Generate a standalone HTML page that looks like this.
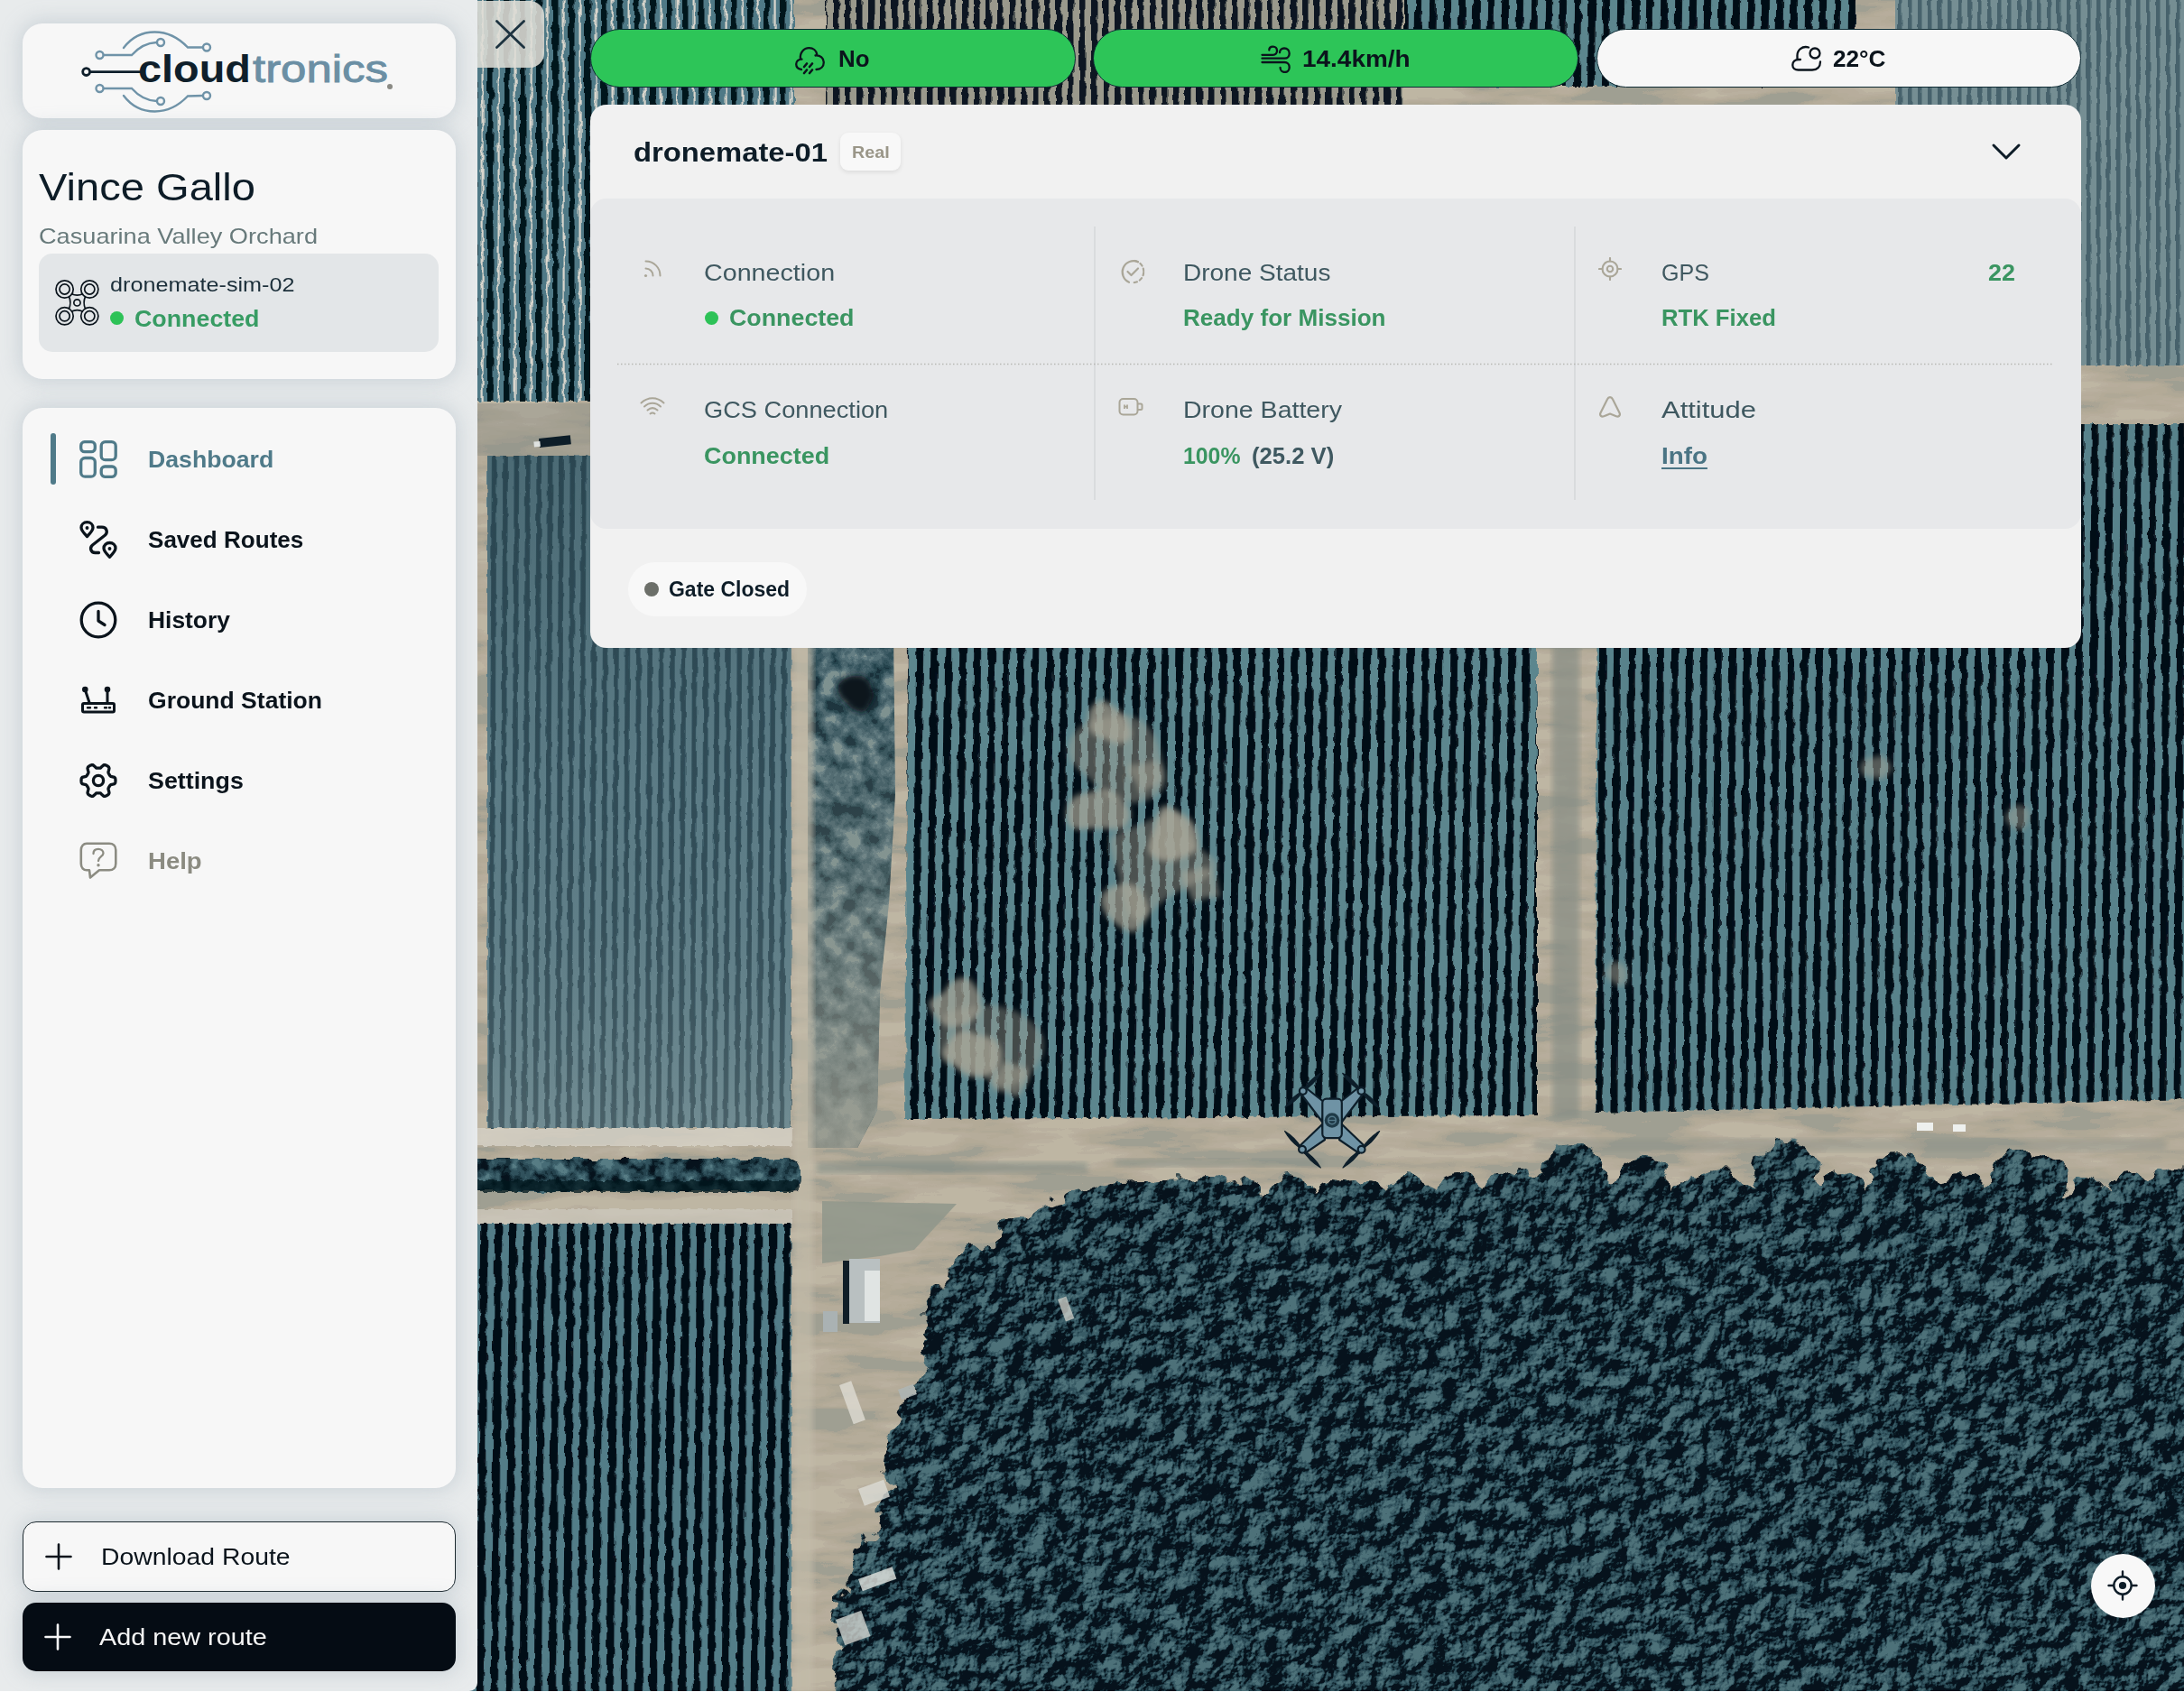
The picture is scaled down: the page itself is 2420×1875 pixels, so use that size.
<!DOCTYPE html>
<html lang="en">
<head>
<meta charset="utf-8">
<title>Cloudtronics Dashboard</title>
<style>
*{box-sizing:border-box;margin:0;padding:0}
html,body{width:2420px;height:1875px;overflow:hidden;background:#fff}
body{position:relative;font-family:"Liberation Sans",sans-serif;color:#0b141c}
.abs{position:absolute}
.t{position:absolute;white-space:nowrap;line-height:1;transform-origin:0 50%}
#map{position:absolute;left:0;top:0;width:2420px;height:1873.5px;overflow:hidden;background:#3d5a64}
#side{position:absolute;left:0;top:0;width:529px;height:1873.500px;background:#e8ebec;border-bottom-right-radius:9px}
.card{position:absolute;left:25px;width:480px;background:#f7f7f7;border-radius:22px;box-shadow:0 0 22px 3px rgba(150,166,180,.36)}
.nav{font-weight:700;font-size:25px;color:#0b141c}
.pill{position:absolute;top:32px;height:64.500px;border-radius:33px;border:1.5px solid #0d2a33}
.lbl{font-size:26px;color:#3f5860}
.val{font-size:26px;font-weight:700;color:#3a9561}
</style>
</head>
<body>
<svg width="2420" height="1875" viewBox="0 0 2420 1875" style="position:absolute;left:0;top:0">
<defs>
<pattern id="pA" width="16" height="64" patternUnits="userSpaceOnUse" patternTransform="rotate(0.7)">
  <rect width="16" height="64" fill="#5c868e"/><rect x="0" width="7.900" height="64" fill="#050f19"/>
</pattern>
<pattern id="pB" width="16" height="64" patternUnits="userSpaceOnUse" patternTransform="rotate(0.4)">
  <rect width="16" height="64" fill="#59828b"/><rect x="1" width="7.900" height="64" fill="#050f19"/>
</pattern>
<pattern id="pG" width="16" height="64" patternUnits="userSpaceOnUse" patternTransform="rotate(0.5)">
  <rect width="16" height="64" fill="#527d88"/><rect x="0" width="8.300" height="64" fill="#050f19"/>
</pattern>
<pattern id="pC" width="12.400" height="64" patternUnits="userSpaceOnUse" patternTransform="rotate(0.3)">
  <rect width="12.400" height="64" fill="#60808a"/><rect x="2" width="5.500" height="64" fill="#304e59"/>
</pattern>
<pattern id="pD" width="11" height="64" patternUnits="userSpaceOnUse">
  <rect width="11" height="64" fill="#748e93"/><rect x="2" width="4.500" height="64" fill="#46626c"/>
</pattern>
<pattern id="pE" width="18" height="64" patternUnits="userSpaceOnUse">
  <rect width="18" height="64" fill="#4f7986"/><rect x="0" width="6.500" height="64" fill="#06121c"/><rect x="11.500" width="2.200" height="64" fill="#d9d6cd"/>
</pattern>
<pattern id="pF" width="13" height="64" patternUnits="userSpaceOnUse">
  <rect width="13" height="64" fill="#9a998c"/><rect x="0" width="6.500" height="64" fill="#0a1822"/>
</pattern>
<filter id="rough" x="-2%" y="-2%" width="104%" height="104%">
  <feTurbulence type="fractalNoise" baseFrequency="0.14 0.07" numOctaves="2" seed="3" result="n"/>
  <feDisplacementMap in="SourceGraphic" in2="n" scale="6" xChannelSelector="R" yChannelSelector="G"/>
</filter>
<filter id="rough2" x="-2%" y="-2%" width="104%" height="104%">
  <feTurbulence type="fractalNoise" baseFrequency="0.12 0.06" numOctaves="2" seed="8" result="n"/>
  <feDisplacementMap in="SourceGraphic" in2="n" scale="4" xChannelSelector="R" yChannelSelector="G"/>
</filter>
<filter id="forest" x="-3%" y="-6%" width="106%" height="112%" color-interpolation-filters="sRGB"><feTurbulence type="fractalNoise" baseFrequency="0.06" numOctaves="2" seed="14" result="d"/><feDisplacementMap in="SourceGraphic" in2="d" scale="22" xChannelSelector="R" yChannelSelector="G" result="shape"/><feTurbulence type="fractalNoise" baseFrequency="0.05" numOctaves="4" seed="11" result="t"/><feDiffuseLighting in="t" surfaceScale="5" diffuseConstant="1" lighting-color="#ffffff" result="L"><feDistantLight azimuth="225" elevation="45"/></feDiffuseLighting><feColorMatrix in="t" type="matrix" values="1 0 0 0 0  1 0 0 0 0  1 0 0 0 0  0 0 0 0 1" result="n"/><feComposite in="L" in2="n" operator="arithmetic" k1="0" k2="1.6" k3="1.4" k4="-1.29" result="g"/><feComponentTransfer in="g" result="q"><feFuncR type="discrete" tableValues="0.024 0.024 0.024 0.039 0.090 0.149 0.192 0.227 0.259 0.302"/><feFuncG type="discrete" tableValues="0.071 0.071 0.071 0.102 0.188 0.263 0.318 0.361 0.396 0.447"/><feFuncB type="discrete" tableValues="0.110 0.110 0.110 0.145 0.224 0.306 0.361 0.400 0.431 0.478"/><feFuncA type="linear" slope="0" intercept="1"/></feComponentTransfer><feComposite in="q" in2="shape" operator="in"/></filter>
<filter id="ground" x="0" y="0" width="100%" height="100%" color-interpolation-filters="sRGB"><feTurbulence type="fractalNoise" baseFrequency="0.008 0.04" numOctaves="4" seed="2" result="t"/><feColorMatrix in="t" type="matrix" values="3.0 0 0 0 -1.0  3.0 0 0 0 -1.0  3.0 0 0 0 -1.0  0 0 0 0 1" result="g"/><feComponentTransfer in="g" result="q"><feFuncR type="discrete" tableValues="0.627 0.667 0.690 0.702 0.710 0.718 0.729 0.749"/><feFuncG type="discrete" tableValues="0.624 0.647 0.659 0.667 0.675 0.682 0.694 0.714"/><feFuncB type="discrete" tableValues="0.576 0.584 0.592 0.596 0.604 0.612 0.624 0.643"/></feComponentTransfer><feComposite in="q" in2="SourceGraphic" operator="in"/></filter>
<filter id="hedge" x="-3%" y="-30%" width="106%" height="160%" color-interpolation-filters="sRGB"><feTurbulence type="fractalNoise" baseFrequency="0.06" numOctaves="2" seed="34" result="d"/><feDisplacementMap in="SourceGraphic" in2="d" scale="10" xChannelSelector="R" yChannelSelector="G" result="shape"/><feTurbulence type="fractalNoise" baseFrequency="0.06" numOctaves="3" seed="31" result="t"/><feColorMatrix in="t" type="matrix" values="2.0 0 0 0 -0.5  2.0 0 0 0 -0.5  2.0 0 0 0 -0.5  0 0 0 0 1" result="g"/><feComponentTransfer in="g" result="q"><feFuncR type="discrete" tableValues="0.024 0.039 0.090 0.149 0.192 0.235 0.282 0.345"/><feFuncG type="discrete" tableValues="0.071 0.102 0.188 0.263 0.318 0.369 0.427 0.490"/><feFuncB type="discrete" tableValues="0.110 0.145 0.224 0.306 0.361 0.408 0.463 0.518"/></feComponentTransfer><feComposite in="q" in2="shape" operator="in"/></filter><filter id="scrub" x="-3%" y="-6%" width="106%" height="112%" color-interpolation-filters="sRGB"><feTurbulence type="fractalNoise" baseFrequency="0.045" numOctaves="4" seed="21" result="t"/><feColorMatrix in="t" type="matrix" values="2.2 0 0 0 -0.6  2.2 0 0 0 -0.6  2.2 0 0 0 -0.6  0 0 0 0 1" result="g"/><feComponentTransfer in="g" result="q"><feFuncR type="discrete" tableValues="0.078 0.129 0.180 0.227 0.275 0.325 0.392 0.490"/><feFuncG type="discrete" tableValues="0.173 0.251 0.302 0.349 0.392 0.439 0.494 0.569"/><feFuncB type="discrete" tableValues="0.216 0.294 0.345 0.388 0.427 0.467 0.514 0.565"/></feComponentTransfer><feComposite in="q" in2="SourceGraphic" operator="in"/></filter>
<filter id="blur3"><feGaussianBlur stdDeviation="3"/></filter>
<filter id="blur8"><feGaussianBlur stdDeviation="8"/></filter>
</defs>
<rect width="2420" height="1875" fill="#b5ac9a" filter="url(#ground)"/>
<g filter="url(#rough)">
<rect x="520" y="-10" width="360" height="455" fill="url(#pE)"/>
<rect x="915" y="-10" width="640" height="140" fill="url(#pF)"/>
<rect x="1556" y="-10" width="500" height="106" fill="url(#pA)"/>
</g>
<rect x="2100" y="-10" width="330" height="415" fill="url(#pD)" filter="url(#rough2)"/>
<rect x="540" y="505" width="337" height="745" fill="url(#pC)" filter="url(#rough2)"/>
<linearGradient id="lg" x1="0" y1="0" x2="0" y2="1"><stop offset="0" stop-color="#17343f" stop-opacity=".28"/><stop offset=".5" stop-color="#17343f" stop-opacity=".05"/><stop offset="1" stop-color="#c9c9be" stop-opacity=".16"/></linearGradient>
<rect x="540" y="505" width="337" height="745" fill="url(#lg)"/>
<rect x="520" y="447" width="140" height="58" fill="#8c8f88" opacity=".4"/>
<rect x="528" y="1250" width="350" height="20" fill="#d7d3c8" opacity=".8" filter="url(#rough)"/>
<polygon points="895,700 990,700 992,880 985,1000 975,1100 972,1230 950,1272 895,1272" fill="#000" filter="url(#scrub)"/>
<linearGradient id="sg" x1="0" y1="0" x2="0" y2="1"><stop offset="0" stop-color="#9a9d92" stop-opacity="0"/><stop offset=".45" stop-color="#9a9d92" stop-opacity=".25"/><stop offset="1" stop-color="#a09f92" stop-opacity=".85"/></linearGradient>
<polygon points="895,700 990,700 992,880 985,1000 975,1100 972,1230 950,1272 895,1272" fill="url(#sg)"/>
<path d="M967 776Q964 781 961 786Q958 790 952 789Q946 787 942 784Q938 780 934 776Q930 772 928 764Q927 756 935 752Q942 748 951 748Q959 749 963 755Q966 762 968 767Q970 772 967 776Z" fill="#08141e" filter="url(#blur3)"/>
<g filter="url(#rough)">
<polygon points="1006,700 1703,700 1703,1236 1003,1240" fill="url(#pA)"/>
<polygon points="1770,470 2430,470 2430,1218 1768,1233" fill="url(#pB)"/>
<polygon points="500,1356 877,1356 877,1890 500,1890" fill="url(#pG)"/>
</g>
<path d="M1291 856Q1295 873 1280 882Q1264 892 1246 889Q1228 886 1219 875Q1209 863 1194 852Q1179 840 1185 822Q1191 805 1209 799Q1228 793 1245 793Q1262 793 1272 805Q1281 816 1284 828Q1287 840 1291 856Z" fill="#a9a697" opacity="0.45" filter="url(#blur3)"/>
<path d="M1338 972Q1316 984 1304 989Q1292 994 1274 1012Q1255 1029 1249 1007Q1242 985 1239 972Q1236 960 1231 942Q1226 925 1245 920Q1263 914 1284 904Q1304 895 1312 914Q1319 934 1339 947Q1359 960 1338 972Z" fill="#a9a697" opacity="0.45" filter="url(#blur3)"/>
<path d="M1155 1169Q1148 1188 1130 1199Q1112 1210 1095 1197Q1078 1183 1060 1182Q1043 1181 1040 1165Q1038 1150 1041 1135Q1045 1120 1061 1118Q1077 1115 1090 1114Q1103 1113 1118 1118Q1133 1122 1147 1136Q1161 1150 1155 1169Z" fill="#a9a697" opacity="0.4" filter="url(#blur3)"/>
<path d="M1253 809Q1256 817 1248 822Q1240 826 1231 822Q1223 818 1216 816Q1209 814 1207 807Q1205 800 1206 792Q1207 785 1214 779Q1220 773 1228 779Q1236 784 1240 787Q1244 791 1247 795Q1249 800 1253 809Z" fill="#a9a697" opacity="0.75" filter="url(#blur3)"/>
<path d="M1251 910Q1247 921 1234 919Q1221 918 1215 918Q1208 918 1197 919Q1185 920 1183 910Q1180 900 1184 891Q1188 882 1197 880Q1207 878 1216 875Q1225 872 1233 878Q1241 883 1248 891Q1255 900 1251 910Z" fill="#a9a697" opacity="0.7" filter="url(#blur3)"/>
<path d="M1328 934Q1328 944 1319 947Q1310 951 1299 954Q1289 956 1279 950Q1270 945 1273 935Q1276 925 1279 919Q1282 913 1284 901Q1287 889 1298 895Q1309 901 1316 906Q1322 910 1325 918Q1328 925 1328 934Z" fill="#a9a697" opacity="0.8" filter="url(#blur3)"/>
<path d="M1271 1016Q1268 1021 1263 1028Q1259 1034 1251 1032Q1243 1029 1238 1025Q1233 1021 1228 1016Q1222 1010 1220 1000Q1219 989 1229 984Q1239 979 1250 979Q1261 980 1265 988Q1270 997 1272 1004Q1274 1010 1271 1016Z" fill="#a9a697" opacity="0.7" filter="url(#blur3)"/>
<path d="M1086 1118Q1085 1126 1077 1131Q1070 1137 1060 1138Q1049 1139 1042 1133Q1035 1126 1031 1118Q1026 1110 1036 1105Q1046 1101 1049 1095Q1052 1088 1061 1085Q1071 1081 1077 1088Q1083 1095 1086 1102Q1088 1110 1086 1118Z" fill="#a9a697" opacity="0.7" filter="url(#blur3)"/>
<path d="M1108 1180Q1105 1189 1094 1192Q1084 1195 1076 1193Q1067 1191 1063 1186Q1059 1180 1050 1175Q1042 1170 1046 1162Q1051 1154 1058 1147Q1064 1140 1074 1143Q1083 1147 1094 1149Q1104 1151 1108 1161Q1111 1170 1108 1180Z" fill="#a9a697" opacity="0.75" filter="url(#blur3)"/>
<path d="M1138 1200Q1135 1205 1131 1211Q1128 1218 1122 1214Q1115 1209 1107 1209Q1100 1208 1099 1202Q1098 1195 1102 1191Q1107 1186 1110 1180Q1113 1174 1119 1178Q1125 1181 1132 1182Q1139 1183 1140 1189Q1141 1195 1138 1200Z" fill="#a9a697" opacity="0.6" filter="url(#blur3)"/>
<path d="M1351 988Q1354 995 1344 995Q1335 994 1329 998Q1322 1002 1320 995Q1317 988 1315 984Q1312 980 1309 972Q1306 964 1315 965Q1325 965 1331 962Q1337 959 1342 964Q1347 969 1348 974Q1348 980 1351 988Z" fill="#a9a697" opacity="0.55" filter="url(#blur3)"/>
<path d="M1287 865Q1285 870 1280 871Q1275 873 1268 877Q1262 882 1261 874Q1259 867 1255 863Q1250 860 1250 853Q1249 846 1257 847Q1266 848 1271 845Q1276 842 1282 845Q1288 849 1288 854Q1289 860 1287 865Z" fill="#a9a697" opacity="0.5" filter="url(#blur3)"/>
<path d="M2095 854Q2092 858 2089 861Q2085 864 2081 863Q2076 861 2070 861Q2064 860 2062 855Q2060 850 2063 845Q2066 841 2071 840Q2076 840 2081 838Q2085 836 2088 839Q2091 843 2094 846Q2097 850 2095 854Z" fill="#a9a697" opacity="0.5" filter="url(#blur3)"/>
<path d="M2248 909Q2247 913 2244 917Q2241 921 2236 919Q2231 917 2227 915Q2224 912 2222 909Q2220 905 2223 902Q2226 899 2228 896Q2231 893 2235 892Q2240 892 2244 894Q2249 896 2249 901Q2249 905 2248 909Z" fill="#a9a697" opacity="0.45" filter="url(#blur3)"/>
<path d="M1803 1084Q1803 1088 1799 1091Q1795 1093 1791 1091Q1787 1089 1785 1087Q1783 1085 1780 1082Q1777 1080 1779 1077Q1780 1074 1783 1070Q1785 1065 1790 1066Q1795 1066 1799 1069Q1802 1072 1803 1076Q1804 1080 1803 1084Z" fill="#a9a697" opacity="0.5" filter="url(#blur3)"/>
<rect x="1720" y="700" width="30" height="540" fill="#878d85" opacity=".7" filter="url(#blur3)"/>
<rect x="879" y="500" width="22" height="1400" fill="#c3bcaa" opacity=".7" filter="url(#blur3)"/>
<rect x="515" y="1284" width="372" height="36" rx="14" fill="#000" filter="url(#hedge)"/>
<rect x="520" y="1308" width="366" height="13" rx="6" fill="#06121c" opacity=".75" filter="url(#rough)"/>
<rect x="528" y="1340" width="350" height="16" fill="#cfcbc0" opacity=".7" filter="url(#rough)"/>
<polygon points="911,1331 1060,1334 1013,1385 975,1392 911,1400" fill="#8f968b" opacity=".85"/>
<rect x="941" y="1395" width="34" height="71" fill="#b9c0c1"/><rect x="958" y="1408" width="17" height="56" fill="#e0e4e3"/><rect x="912" y="1453" width="16" height="23" fill="#aab2b3"/><rect x="934" y="1397" width="7" height="70" fill="#101e27"/>
<rect x="905" y="1288" width="300" height="12" fill="#7f8a84" opacity=".6" filter="url(#blur3)"/>
<rect x="1235" y="1284" width="230" height="9" fill="#7f8a84" opacity=".5" filter="url(#blur3)"/>
<rect x="1700" y="1262" width="700" height="14" fill="#8a9088" opacity=".45" filter="url(#blur3)"/>
<rect x="2124" y="1244" width="18" height="9" fill="#eef0ee"/><rect x="2164" y="1246" width="14" height="8" fill="#eef0ee"/><rect x="597" y="486" width="35" height="10" fill="#0d1d28" transform="rotate(-6 597 486)"/><rect x="591" y="489" width="7" height="6" fill="#dfe2e0" transform="rotate(-6 597 486)"/>
<g filter="url(#forest)" fill="#000"><polygon points="925,1900 930,1790 955,1715 979,1684 992,1640 982,1606 1006,1545 1040,1497 1023,1477 1033,1429 1088,1395 1142,1344 1190,1324 1240,1308 1332,1304 1400,1322 1600,1324 1760,1324 1900,1324 2100,1324 2260,1324 2440,1320 2440,1900"/><ellipse cx="1746" cy="1302" rx="34" ry="34"/><ellipse cx="1820" cy="1312" rx="30" ry="30"/><ellipse cx="1979" cy="1301" rx="36" ry="36"/><ellipse cx="2105" cy="1309" rx="32" ry="32"/><ellipse cx="2236" cy="1307" rx="30" ry="30"/><ellipse cx="2262" cy="1308" rx="28" ry="28"/><ellipse cx="2362" cy="1330" rx="30" ry="30"/><ellipse cx="1559" cy="1330" rx="28" ry="28"/><ellipse cx="1615" cy="1329" rx="30" ry="30"/><ellipse cx="1680" cy="1327" rx="30" ry="30"/><ellipse cx="1905" cy="1324" rx="28" ry="28"/><ellipse cx="2040" cy="1324" rx="26" ry="26"/><ellipse cx="2170" cy="1326" rx="26" ry="26"/><ellipse cx="2410" cy="1322" rx="30" ry="30"/><ellipse cx="1500" cy="1332" rx="26" ry="26"/><ellipse cx="1430" cy="1334" rx="26" ry="26"/><ellipse cx="1370" cy="1332" rx="26" ry="26"/><ellipse cx="1340" cy="1326" rx="23" ry="23"/><ellipse cx="1381" cy="1332" rx="20" ry="20"/><ellipse cx="1429" cy="1327" rx="25" ry="25"/><ellipse cx="1472" cy="1328" rx="18" ry="18"/><ellipse cx="1518" cy="1328" rx="18" ry="18"/><ellipse cx="1566" cy="1328" rx="22" ry="22"/><ellipse cx="1612" cy="1326" rx="24" ry="24"/><ellipse cx="1663" cy="1329" rx="24" ry="24"/><ellipse cx="1702" cy="1329" rx="26" ry="26"/><ellipse cx="1738" cy="1333" rx="19" ry="19"/><ellipse cx="1786" cy="1332" rx="24" ry="24"/><ellipse cx="1831" cy="1329" rx="26" ry="26"/><ellipse cx="1877" cy="1331" rx="25" ry="25"/><ellipse cx="1930" cy="1332" rx="23" ry="23"/><ellipse cx="1965" cy="1328" rx="20" ry="20"/><ellipse cx="2002" cy="1327" rx="20" ry="20"/><ellipse cx="2043" cy="1329" rx="23" ry="23"/><ellipse cx="2085" cy="1328" rx="20" ry="20"/><ellipse cx="2139" cy="1331" rx="23" ry="23"/><ellipse cx="2177" cy="1327" rx="24" ry="24"/><ellipse cx="2220" cy="1331" rx="26" ry="26"/><ellipse cx="2266" cy="1333" rx="23" ry="23"/><ellipse cx="2316" cy="1326" rx="20" ry="20"/><ellipse cx="2358" cy="1328" rx="20" ry="20"/><ellipse cx="2412" cy="1329" rx="25" ry="25"/><ellipse cx="1130" cy="1375" rx="27" ry="27"/><ellipse cx="1085" cy="1415" rx="33" ry="33"/><ellipse cx="1050" cy="1450" rx="28" ry="28"/><ellipse cx="1050" cy="1505" rx="25" ry="25"/><ellipse cx="1025" cy="1560" rx="25" ry="25"/><ellipse cx="1005" cy="1620" rx="29" ry="29"/><ellipse cx="1000" cy="1680" rx="25" ry="25"/><ellipse cx="975" cy="1730" rx="29" ry="29"/><ellipse cx="955" cy="1790" rx="33" ry="33"/><ellipse cx="945" cy="1850" rx="27" ry="27"/></g>
<rect x="951" y="1650" width="30" height="20" fill="#dcdcd6" opacity=".8" transform="rotate(-20 951 1650)"/>
<rect x="951" y="1750" width="40" height="14" fill="#e2e3de" opacity=".8" transform="rotate(-20 951 1750)"/>
<rect x="926" y="1795" width="30" height="30" fill="#cfd2cd" opacity=".8" transform="rotate(-20 926 1795)"/>
<rect x="995" y="1540" width="18" height="12" fill="#aeb6b6" opacity=".8" transform="rotate(-20 995 1540)"/>
<rect x="930" y="1535" width="14" height="46" fill="#dedcd3" opacity=".8" transform="rotate(-20 930 1535)"/>
<rect x="1172" y="1440" width="10" height="26" fill="#c9ccc6" opacity=".8" transform="rotate(-20 1172 1440)"/>
</svg>
<!-- ================= SIDEBAR ================= -->
<div id="side">
  <!-- logo card -->
  <div class="card" style="top:26px;height:105px">
    <svg class="abs" style="left:0;top:0" width="480" height="105" viewBox="25 26 480 105">
      <g fill="none" stroke="#6f93a8" stroke-width="2.4" stroke-linecap="round">
        <path d="M137 53 C146 41 158 35.500 171.500 35.500 C186 35.500 198 42 208 52.500 L224.500 52.500"/>
        <path d="M115 61 L146 61 C154 52 162 47.500 173.500 47"/>
        <path d="M137 106 C146 118 158 123.500 171.500 123.500 C186 123.500 198 117 208 106.500 L224.500 106"/>
        <path d="M115 98 L146 98 C154 107 162 111.500 173.500 112"/>
      </g>
      <g fill="#f7f7f7" stroke="#6f93a8" stroke-width="2.4">
        <circle cx="110.500" cy="61" r="4"/><circle cx="178" cy="47" r="4"/><circle cx="229" cy="52.500" r="4"/>
        <circle cx="110.500" cy="98" r="4"/><circle cx="178" cy="112" r="4"/><circle cx="229" cy="106" r="4"/>
      </g>
      <path d="M100 79.600 L157 79.600" stroke="#0f1f2b" stroke-width="2.800" fill="none"/>
      <circle cx="95.600" cy="79.600" r="3.900" fill="#f7f7f7" stroke="#0f1f2b" stroke-width="2.800"/>
      <text x="153" y="91" font-family="Liberation Sans, sans-serif" font-weight="700" font-size="43" fill="#0f1f2b" textLength="125" lengthAdjust="spacingAndGlyphs">cloud</text>
      <text x="280" y="91" font-family="Liberation Sans, sans-serif" font-weight="400" font-size="43" fill="#6b8fa4" stroke="#6b8fa4" stroke-width="0.900" textLength="150" lengthAdjust="spacingAndGlyphs">tronics</text>
      <circle cx="432" cy="96" r="3" fill="#8a8a84"/>
    </svg>
  </div>

  <!-- user card -->
  <div class="card" style="top:144px;height:276px">
    <div class="t" id="t_name" style="left:18.20px;top:43.45px;transform:scaleX(1.1213);font-size:42px;color:#0d1c27">Vince Gallo</div>
    <div class="t" id="t_org" style="left:18.20px;top:105.68px;transform:scaleX(1.1318);font-size:24px;color:#687a7b">Casuarina Valley Orchard</div>
    <div class="abs" style="left:18px;top:137px;width:443px;height:109px;border-radius:15px;background:#e3e6e8"></div>
    <svg class="abs" style="left:35px;top:165px" width="52" height="54" viewBox="0 0 52 54" fill="none" stroke="#0b141c" stroke-width="1.700">
      <circle cx="11.600" cy="11.500" r="9.600"/><circle cx="11.600" cy="11.500" r="5.600"/>
      <circle cx="39.300" cy="11.500" r="9.600"/><circle cx="39.300" cy="11.500" r="5.600"/>
      <circle cx="11.600" cy="41.300" r="9.600"/><circle cx="11.600" cy="41.300" r="5.600"/>
      <circle cx="39.300" cy="41.300" r="9.600"/><circle cx="39.300" cy="41.300" r="5.600"/>
      <path d="M19 16.600 Q25.500 19.800 32 16.600 M19 36.200 Q25.500 33 32 36.200 M16.400 19.300 Q19.400 26.400 16.400 33.500 M34.600 19.300 Q31.600 26.400 34.600 33.500"/>
      <circle cx="25.450" cy="26.400" r="3.600"/>
    </svg>
    <div class="t" id="t_sim" style="left:96.60px;top:161.38px;transform:scaleX(1.1456);font-size:22px;color:#1c2f3a">dronemate-sim-02</div>
    <div class="abs" style="left:97px;top:201px;width:15px;height:15px;border-radius:50%;background:#2dc257"></div>
    <div class="t" id="t_conn0" style="left:124.20px;top:196.54px;transform:scaleX(1.0721);font-size:25px;font-weight:700;color:#379c63">Connected</div>
  </div>

  <!-- nav card -->
  <div class="card" style="top:452px;height:1197px">
    <div class="abs" style="left:31px;top:28px;width:5.500px;height:57px;border-radius:3px;background:#4f7a89"></div>
    <!-- dashboard icon -->
    <svg class="abs" style="left:63px;top:36px" width="42" height="42" viewBox="0 0 42 42" fill="none" stroke="#4f7a89" stroke-width="3.300">
      <rect x="1.700" y="1.700" width="15.600" height="11" rx="4"/>
      <rect x="24.200" y="1.700" width="16" height="20" rx="4.500"/>
      <rect x="1.700" y="19.500" width="15.600" height="20.700" rx="4.500"/>
      <rect x="24.200" y="29" width="16" height="11.300" rx="4"/>
    </svg>
    <div class="t nav" id="t_n1" style="left:139.40px;top:44.84px;transform:scaleX(1.0667);color:#4f7a89">Dashboard</div>
    <!-- routes icon -->
    <svg class="abs" style="left:63px;top:125px" width="42" height="42" viewBox="0 0 42 42" fill="none" stroke="#0b141c" stroke-width="3.300" stroke-linecap="round" stroke-linejoin="round">
      <path d="M8.500 17.500 C4 13 2 10.500 2 7.800 C2 4.300 4.800 1.700 8.500 1.700 C12.200 1.700 15 4.300 15 7.800 C15 10.500 13 13 8.500 17.500 Z"/>
      <path d="M33.500 40.300 C29 35.800 27 33.300 27 30.600 C27 27.100 29.800 24.500 33.500 24.500 C37.200 24.500 40 27.100 40 30.600 C40 33.300 38 35.800 33.500 40.300 Z"/>
      <path d="M20.500 7.200 L25 7.200 C30 7.200 32 12.500 28.500 16 L14.500 27 C11 30 12.500 35.500 17.500 35.500 L21.500 35.500"/>
      <circle cx="8.500" cy="8" r="1.200" fill="#0b141c" stroke-width="1.500"/><circle cx="33.500" cy="31" r="1.200" fill="#0b141c" stroke-width="1.500"/>
    </svg>
    <div class="t nav" id="t_n2" style="left:139.40px;top:134.14px;transform:scaleX(1.0421);">Saved Routes</div>
    <!-- clock -->
    <svg class="abs" style="left:63px;top:214px" width="42" height="42" viewBox="0 0 42 42" fill="none" stroke="#0b141c" stroke-width="3.300" stroke-linecap="round" stroke-linejoin="round">
      <circle cx="21" cy="21" r="18.800"/><path d="M21 11.500 L21 22 L28 26.500"/>
    </svg>
    <div class="t nav" id="t_n3" style="left:139.40px;top:222.84px;transform:scaleX(1.0553);">History</div>
    <!-- router -->
    <svg class="abs" style="left:63px;top:303px" width="42" height="42" viewBox="0 0 42 42" fill="none" stroke="#0b141c" stroke-width="3" stroke-linecap="round" stroke-linejoin="round">
      <rect x="3.500" y="24.500" width="35" height="9.500" rx="1.500"/>
      <path d="M11 23.500 L6.500 10 M31 23.500 L31 10"/>
      <circle cx="6.300" cy="9" r="1.800" fill="#0b141c"/><circle cx="31" cy="9" r="1.800" fill="#0b141c"/>
      <path d="M9 29.300 L12 29.300 M17 29.300 L19 29.300 M28 29.300 L30 29.300 M33 29.300 L34 29.300" stroke-width="2.400"/>
    </svg>
    <div class="t nav" id="t_n4" style="left:139.40px;top:311.84px;transform:scaleX(1.0609);">Ground Station</div>
    <!-- gear -->
    <svg class="abs" style="left:63px;top:392px" width="42" height="42" viewBox="0 0 42 42" fill="none" stroke="#0b141c" stroke-width="3.300" stroke-linejoin="round">
      <path d="M40.0 21.0L39.9 22.2L39.7 23.5L38.9 24.6L36.8 25.2L34.8 25.7L33.9 26.3L33.4 27.1L33.0 27.9L32.5 28.7L32.1 29.5L32.0 30.6L32.6 32.6L33.0 34.7L32.5 35.9L31.5 36.8L30.5 37.5L29.4 38.0L28.2 38.4L26.9 38.3L25.2 36.8L23.8 35.3L22.8 34.8L21.9 34.8L21.0 34.8L20.1 34.8L19.2 34.8L18.2 35.3L16.8 36.8L15.1 38.3L13.8 38.4L12.6 38.0L11.5 37.5L10.5 36.8L9.5 35.9L9.0 34.7L9.4 32.6L10.0 30.6L9.9 29.5L9.5 28.7L9.0 27.9L8.6 27.1L8.1 26.3L7.2 25.7L5.2 25.2L3.1 24.6L2.3 23.5L2.1 22.2L2.0 21.0L2.1 19.8L2.3 18.5L3.1 17.4L5.2 16.8L7.2 16.3L8.1 15.7L8.6 14.9L9.0 14.1L9.5 13.3L9.9 12.5L10.0 11.4L9.4 9.4L9.0 7.3L9.5 6.1L10.5 5.2L11.5 4.5L12.6 4.0L13.8 3.6L15.1 3.7L16.8 5.2L18.2 6.7L19.2 7.2L20.1 7.2L21.0 7.2L21.9 7.2L22.8 7.2L23.8 6.7L25.2 5.2L26.9 3.7L28.2 3.6L29.4 4.0L30.5 4.5L31.5 5.2L32.5 6.1L33.0 7.3L32.6 9.4L32.0 11.4L32.1 12.5L32.5 13.3L33.0 14.1L33.4 14.9L33.9 15.7L34.8 16.3L36.8 16.8L38.9 17.4L39.7 18.5L39.9 19.8Z" stroke-linejoin="round"/>
      <circle cx="21" cy="21" r="5.600"/>
    </svg>
    <div class="t nav" id="t_n5" style="left:139.40px;top:401.14px;transform:scaleX(1.0728);">Settings</div>
    <!-- help -->
    <svg class="abs" style="left:63px;top:481px" width="42" height="42" viewBox="0 0 42 42" fill="none" stroke="#8c8c82" stroke-width="2.600" stroke-linecap="round" stroke-linejoin="round">
      <path d="M8 1.800 L33 1.800 C37.500 1.800 40.300 4.600 40.300 9 L40.300 24 C40.300 28.500 37.500 31.300 33 31.300 L22 31.300 L12 39.500 L11 31.300 L8 31.300 C4.500 31.300 1.800 28.500 1.800 24 L1.800 9 C1.800 4.600 4.500 1.800 8 1.800 Z"/>
      <path d="M15.500 13 C15.500 9.500 18 7.800 21 7.800 C24 7.800 26.500 9.700 26.500 12.500 C26.500 16 21 16.500 21 21" stroke-width="2.300"/>
      <circle cx="21" cy="25.800" r="1.100" fill="#8c8c82" stroke-width="1.200"/>
    </svg>
    <div class="t nav" id="t_n6" style="left:139.40px;top:490.14px;transform:scaleX(1.1017);color:#8b8b81">Help</div>
  </div>

  <!-- bottom buttons -->
  <div class="abs" style="left:25px;top:1686px;width:480px;height:78px;border-radius:15px;background:#f7f7f7;border:1.500px solid #1d2a30;box-shadow:0 0 22px 3px rgba(150,166,180,.36)"></div>
  <svg class="abs" style="left:50px;top:1710px" width="30" height="30" viewBox="0 0 30 30" stroke="#0b141c" stroke-width="2.600" stroke-linecap="round"><path d="M15 1.500 L15 28.500 M1.500 15 L28.500 15"/></svg>
  <div class="t" id="t_dl" style="left:111.90px;top:1711.99px;transform:scaleX(1.0903);font-size:26px;color:#0b141c">Download Route</div>
  <div class="abs" style="left:25px;top:1776px;width:480px;height:76px;border-radius:15px;background:#050c14;box-shadow:0 0 22px 3px rgba(150,166,180,.36)"></div>
  <svg class="abs" style="left:49px;top:1799px" width="30" height="30" viewBox="0 0 30 30" stroke="#f7f7f7" stroke-width="2.600" stroke-linecap="round"><path d="M15 1.500 L15 28.500 M1.500 15 L28.500 15"/></svg>
  <div class="t" id="t_add" style="left:109.90px;top:1801.49px;transform:scaleX(1.1081);font-size:26px;color:#f5f5f5">Add new route</div>
</div>

<!-- close button -->
<div class="abs" style="left:529px;top:0.500px;width:73.700px;height:74.200px;background:rgba(222,221,214,.88);border-radius:0 16px 16px 0"></div>
<svg class="abs" style="left:549.300px;top:22.400px" width="33" height="32" viewBox="0 0 33 32" stroke="#1d3340" stroke-width="2.800" stroke-linecap="round"><path d="M1.500 1.500 L31.500 30.500 M31.500 1.500 L1.500 30.500"/></svg>

<!-- ================= TOP PILLS ================= -->
<div class="pill" style="left:653.500px;width:538.500px;background:#2dc558"></div>
<svg class="abs" style="left:881px;top:52px" width="33" height="31" viewBox="0 0 33 31" fill="none" stroke="#0b141c" stroke-width="2.300" stroke-linecap="round">
  <path d="M7 25 C3.500 24.500 1.200 22 1.200 19 C1.200 15.800 3.800 13.500 7.500 13.600 M6 13 C5 6.500 9.500 1.200 15.500 1.200 C20 1.200 23.500 4 24.300 8.500 M22.500 9.500 C28 9 31.800 12.500 31.800 17 C31.800 21.500 28.500 24.800 23.500 25"/>
  <path d="M13 18.500 L10 22 M19 18.500 L16 22 M13 25.500 L10 29 M19 25.500 L16 29" stroke-width="2.600"/>
</svg>
<div class="t" id="t_p1" style="left:929.20px;top:53.04px;transform:scaleX(1.0352);font-size:25px;font-weight:700">No</div>

<div class="pill" style="left:1211px;width:538px;background:#2dc558"></div>
<svg class="abs" style="left:1397px;top:50px" width="33" height="31" viewBox="0 0 33 31" fill="none" stroke="#0b141c" stroke-width="2.300" stroke-linecap="round">
  <path d="M1.500 10.800 L13.500 10.800 C16.500 10.800 18 8.600 18 6.200 C18 3.600 16 1.600 13.600 1.600 C11 1.600 9.300 3.300 9.300 5.500"/>
  <path d="M1.500 14.700 L26.500 14.700 C29.500 14.700 31.700 12.400 31.700 9.300 C31.700 6 29.300 3.500 26 3.500 C23 3.500 21 5.500 21 8.300"/>
  <path d="M1.500 19 L26.300 19 C29.500 19 31.700 21.400 31.700 24.500 C31.700 27.600 29.500 30 26.600 30 C23.500 30 21.600 27.800 21.600 25"/>
</svg>
<div class="t" id="t_p2" style="left:1442.70px;top:53.04px;transform:scaleX(1.1185);font-size:25px;font-weight:700">14.4km/h</div>

<div class="pill" style="left:1769px;width:537px;background:#f7f7f7"></div>
<svg class="abs" style="left:1985px;top:50px" width="34" height="29" viewBox="0 0 34 29" fill="none" stroke="#0b141c" stroke-width="2.300" stroke-linecap="round">
  <path d="M19 2.500 C12 0.500 6 5.500 6.500 12.500 L6.500 16 L10 16 M8 16 C4 16 1.300 18.500 1.300 22 C1.300 25.500 4 27.500 7.500 27.500 L23 27.500 C28.500 27.500 32 24 32 18.500"/>
  <circle cx="26" cy="9" r="5.500"/>
</svg>
<div class="t" id="t_p3" style="left:2031.20px;top:52.84px;transform:scaleX(1.0473);font-size:25px;font-weight:700">22°C</div>

<!-- ================= PANEL ================= -->
<div class="abs" style="left:653.500px;top:115.500px;width:1652.500px;height:602.500px;border-radius:18px;background:#f1f1f1"></div>
<div class="abs" style="left:654px;top:220px;width:1652px;height:366px;border-radius:18px;background:#e7e8ea"></div>
<div class="t" id="t_dm" style="left:702.40px;top:153.80px;transform:scaleX(1.0923);font-size:30px;font-weight:700;color:#0d1c27">dronemate-01</div>
<div class="abs" style="left:931px;top:147.300px;width:67px;height:42px;border-radius:9px;background:#f8f8f8;box-shadow:0 2px 5px rgba(0,0,0,.09)"></div>
<div class="t" id="t_real" style="left:944.20px;top:159.56px;transform:scaleX(1.0965);font-size:18px;font-weight:700;color:#9a9688">Real</div>
<svg class="abs" style="left:2206px;top:157px" width="34" height="22" viewBox="0 0 34 22" fill="none" stroke="#0d1c27" stroke-width="3" stroke-linecap="round" stroke-linejoin="round"><path d="M3 4 L17 18 L31 4"/></svg>

<!-- dividers -->
<div class="abs" style="left:1212px;top:251px;width:1.500px;height:303px;background:#d9dbdd"></div>
<div class="abs" style="left:1744px;top:251px;width:1.500px;height:303px;background:#d9dbdd"></div>
<svg class="abs" style="left:684px;top:402px" width="1592" height="3"><path d="M0 1.500 L1592 1.500" stroke="#b7b8b4" stroke-width="1.500" stroke-dasharray="1.500 2.500"/></svg>

<!-- col 1 -->
<svg class="abs" style="left:712px;top:287px" width="22" height="22" viewBox="0 0 22 22" fill="none" stroke="#aaa698" stroke-width="2" stroke-linecap="round">
  <circle cx="3.500" cy="18.500" r="1.600" fill="#aaa698" stroke="none"/>
  <path d="M3.500 10.500 C8 10.500 11.500 14 11.500 18.500 M3.500 2.500 C12.500 2.500 19.500 9.500 19.500 18.500" />
</svg>
<div class="t lbl" id="t_l1" style="left:780.20px;top:288.99px;transform:scaleX(1.1030);">Connection</div>
<div class="abs" style="left:781px;top:345px;width:15px;height:15px;border-radius:50%;background:#2dc257"></div>
<div class="t val" id="t_v1" style="left:807.70px;top:339.39px;transform:scaleX(1.0309);">Connected</div>

<svg class="abs" style="left:709px;top:439px" width="28" height="23" viewBox="0 0 28 23" fill="none" stroke="#aaa698" stroke-width="2" stroke-linecap="round">
  <path d="M1.500 7.500 C9 0.500 19 0.500 26.500 7.500 M5 11.500 C10.500 6.500 17.500 6.500 23 11.500 M8.500 15.500 C12 12.500 16 12.500 19.500 15.500 M11.500 19.500 C13 18.300 15 18.300 16.500 19.500"/>
</svg>
<div class="t lbl" id="t_l4" style="left:780.20px;top:440.99px;transform:scaleX(1.0466);">GCS Connection</div>
<div class="t val" id="t_v4" style="left:780.20px;top:491.99px;transform:scaleX(1.0361);">Connected</div>

<!-- col 2 -->
<svg class="abs" style="left:1241px;top:287px" width="28" height="28" viewBox="0 0 28 28" fill="none" stroke="#aaa698" stroke-width="2.200" stroke-linecap="round" stroke-linejoin="round">
  <path d="M20 3.300 A12.300 12.300 0 1 0 10 25.800"/>
  <circle cx="14" cy="14" r="12.300" stroke-dasharray="3.200 3.400" stroke-dashoffset="-1" pathLength="77" style="clip-path:inset(0 0 0 50%)"/>
  <path d="M8.500 14 L12.500 18 L20 10.500"/>
</svg>
<div class="t lbl" id="t_l2" style="left:1311.20px;top:288.99px;transform:scaleX(1.0768);">Drone Status</div>
<div class="t val" id="t_v2" style="left:1311.20px;top:339.39px;transform:scaleX(1.0025);">Ready for Mission</div>

<svg class="abs" style="left:1239px;top:440px" width="28" height="22" viewBox="0 0 28 22" fill="none" stroke="#aaa698" stroke-width="2" stroke-linejoin="round">
  <rect x="1.500" y="2" width="20" height="17.500" rx="4"/>
  <path d="M22 7.500 L25 7.500 C26 7.500 26.500 8 26.500 9 L26.500 12.500 C26.500 13.500 26 14 25 14 L22 14"/>
  <path d="M7 8.500 L7 13 M10 8.500 L10 13 M7 10.700 L10 10.700" stroke-width="1.800"/>
</svg>
<div class="t lbl" id="t_l5" style="left:1311.20px;top:440.99px;transform:scaleX(1.0972);">Drone Battery</div>
<div class="t val" id="t_v5" style="left:1311.20px;top:491.99px;transform:scaleX(0.9549);">100%</div>
<div class="t" id="t_v5b" style="left:1387.20px;top:491.99px;transform:scaleX(0.9870);font-size:26px;font-weight:700;color:#3f5860">(25.2 V)</div>

<!-- col 3 -->
<svg class="abs" style="left:1771px;top:285px" width="26" height="26" viewBox="0 0 26 26" fill="none" stroke="#aaa698" stroke-width="2.100" stroke-linecap="round">
  <circle cx="13" cy="13" r="8.500"/><circle cx="13" cy="13" r="3.200"/>
  <path d="M13 1 L13 4.500 M13 21.500 L13 25 M1 13 L4.500 13 M21.500 13 L25 13"/>
</svg>
<div class="t lbl" id="t_l3" style="left:1841.20px;top:288.99px;transform:scaleX(0.9632);">GPS</div>
<div class="t val" id="t_g22" style="left:2202.80px;top:288.99px;transform:scaleX(1.0338);font-weight:700">22</div>
<div class="t val" id="t_v3" style="left:1841.20px;top:339.39px;transform:scaleX(0.9869);">RTK Fixed</div>

<svg class="abs" style="left:1771px;top:438px" width="26" height="26" viewBox="0 0 26 26" fill="none" stroke="#aaa698" stroke-width="2.200" stroke-linejoin="round" stroke-linecap="round">
  <path d="M13 2.200 C14.300 2.200 15.300 3 16 4.500 L23.500 19.500 C24.800 22.300 22.500 24.500 19.800 23.300 L13 20.500 L6.200 23.300 C3.500 24.500 1.200 22.300 2.500 19.500 L10 4.500 C10.700 3 11.700 2.200 13 2.200 Z"/>
</svg>
<div class="t lbl" id="t_l6" style="left:1841.20px;top:440.99px;transform:scaleX(1.1897);">Attitude</div>
<div class="t" id="t_v6" style="left:1841.20px;top:491.99px;transform:scaleX(1.0681);font-size:26px;font-weight:700;color:#4a7484;text-decoration:underline;text-decoration-thickness:2px;text-underline-offset:4px">Info</div>

<!-- gate -->
<div class="abs" style="left:696px;top:623px;width:198px;height:60px;border-radius:30px;background:#f8f8f8"></div>
<div class="abs" style="left:714px;top:645px;width:16px;height:16px;border-radius:50%;background:#6c6f69"></div>
<div class="t" id="t_gate" style="left:741.20px;top:641.53px;transform:scaleX(0.9991);font-size:23px;font-weight:700;color:#0d1c27">Gate Closed</div>

<!-- drone marker -->
<svg class="abs" style="left:1416px;top:1182px" width="120" height="120" viewBox="1416 1182 120 120">
  <g fill="#0d1e2a" stroke="#0d1e2a" stroke-width="1.200" stroke-linejoin="round"><path d="M1443.8 1209.0 Q1456.1 1201.9 1462.9 1189.4 Q1450.6 1196.5 1443.8 1209.0Z"/><path d="M1443.8 1209.0 Q1431.3 1215.2 1424.0 1227.0 Q1436.5 1220.8 1443.8 1209.0Z"/><path d="M1508.4 1209.0 Q1500.7 1196.4 1487.7 1189.4 Q1495.4 1202.0 1508.4 1209.0Z"/><path d="M1508.4 1209.0 Q1515.7 1221.2 1528.2 1227.9 Q1520.9 1215.7 1508.4 1209.0Z"/><path d="M1443.0 1273.8 Q1436.0 1261.0 1423.6 1253.5 Q1430.6 1266.3 1443.0 1273.8Z"/><path d="M1443.0 1273.8 Q1450.5 1286.6 1463.3 1294.0 Q1455.8 1281.2 1443.0 1273.8Z"/><path d="M1508.6 1273.8 Q1521.3 1266.3 1528.6 1253.5 Q1515.9 1261.0 1508.6 1273.8Z"/><path d="M1508.6 1273.8 Q1495.6 1281.2 1488.0 1294.0 Q1501.0 1286.6 1508.6 1273.8Z"/></g>
  <g stroke="#0d1e2a" stroke-width="2.200" stroke-linejoin="round" fill="#6f93a5">
    <path d="M1468 1222 L1447 1205.500 L1441.500 1212 L1465 1243 Z"/>
    <path d="M1484 1222 L1505 1205.500 L1510.500 1212 L1487 1243 Z"/>
    <path d="M1465 1246 L1439.500 1270.500 L1446 1278 L1468 1263 Z"/>
    <path d="M1487 1246 L1512.500 1270.500 L1506 1278 L1484 1263 Z"/>
    <rect x="1465.300" y="1217.600" width="21.500" height="43.500" rx="4.500"/>
    <circle cx="1443.800" cy="1209" r="3.900"/><circle cx="1508.400" cy="1209" r="3.900"/>
    <circle cx="1443" cy="1273.800" r="3.900"/><circle cx="1508.600" cy="1273.800" r="3.900"/>
  </g>
  <circle cx="1476" cy="1241.500" r="8.300" fill="#1f3a47"/>
  <circle cx="1476" cy="1241.500" r="4.200" fill="none" stroke="#54798a" stroke-width="1.600"/>
  <path d="M1472 1241.500 L1480 1241.500" stroke="#54798a" stroke-width="1.300"/>
</svg>
<!-- locate button -->
<div class="abs" style="left:2317px;top:1722px;width:71px;height:71px;border-radius:50%;background:#f8f8f8"></div>
<svg class="abs" style="left:2334px;top:1739px" width="36" height="36" viewBox="0 0 36 36" fill="none" stroke="#0d1c27" stroke-width="2.400" stroke-linecap="round">
  <circle cx="18" cy="18" r="9.700"/><circle cx="18" cy="18" r="4.100" fill="#0d1c27" stroke="none"/>
  <path d="M18 2.500 L18 8 M18 28 L18 33.500 M2.500 18 L8 18 M28 18 L33.500 18"/>
</svg>
<div class="abs" style="left:0;top:1873.500px;width:2420px;height:1.500px;background:#fff"></div>
</body>
</html>
